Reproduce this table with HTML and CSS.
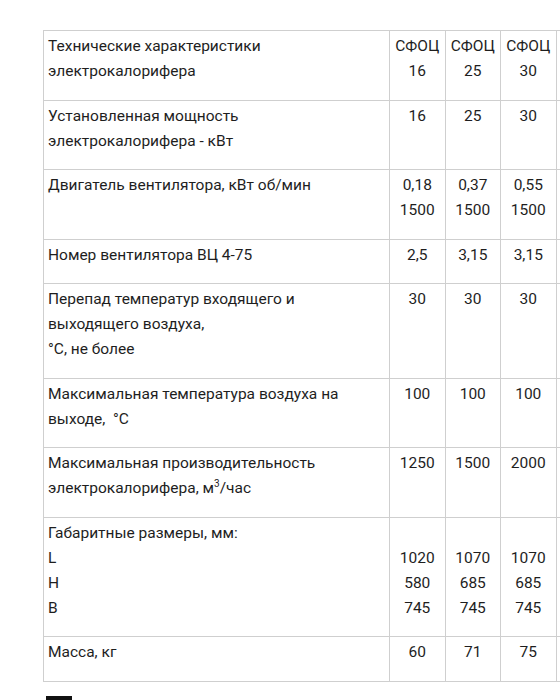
FILE: index.html
```html
<!DOCTYPE html>
<html lang="ru">
<head>
<meta charset="utf-8">
<title>Технические характеристики</title>
<link rel="stylesheet" href="styles.css">
</head>
<body>
<div class="page">
  <table class="spec">
    <colgroup>
      <col class="c-name">
      <col class="c-val">
      <col class="c-val">
      <col class="c-val">
      <col class="c-val">
    </colgroup>
    <tr>
      <td class="name">Технические характеристики электрокалорифера</td>
      <td class="val">СФОЦ 16</td>
      <td class="val">СФОЦ 25</td>
      <td class="val">СФОЦ 30</td>
      <td class="val"></td>
    </tr>
    <tr>
      <td class="name">Установленная мощность электрокалорифера - кВт</td>
      <td class="val">16</td>
      <td class="val">25</td>
      <td class="val">30</td>
      <td class="val"></td>
    </tr>
    <tr>
      <td class="name">Двигатель вентилятора, кВт об/мин</td>
      <td class="val">0,18<br>1500</td>
      <td class="val">0,37<br>1500</td>
      <td class="val">0,55<br>1500</td>
      <td class="val"></td>
    </tr>
    <tr>
      <td class="name">Номер вентилятора ВЦ 4-75</td>
      <td class="val">2,5</td>
      <td class="val">3,15</td>
      <td class="val">3,15</td>
      <td class="val"></td>
    </tr>
    <tr>
      <td class="name">Перепад температур входящего и<br>выходящего воздуха,<br>°С, не более</td>
      <td class="val">30</td>
      <td class="val">30</td>
      <td class="val">30</td>
      <td class="val"></td>
    </tr>
    <tr>
      <td class="name">Максимальная температура воздуха на выходе,&nbsp; °С</td>
      <td class="val">100</td>
      <td class="val">100</td>
      <td class="val">100</td>
      <td class="val"></td>
    </tr>
    <tr>
      <td class="name">Максимальная производительность электрокалорифера, м<sup>3</sup>/час</td>
      <td class="val">1250</td>
      <td class="val">1500</td>
      <td class="val">2000</td>
      <td class="val"></td>
    </tr>
    <tr>
      <td class="name">Габаритные размеры, мм:<br>L<br>H<br>B</td>
      <td class="val"><br>1020<br>580<br>745</td>
      <td class="val"><br>1070<br>685<br>745</td>
      <td class="val"><br>1070<br>685<br>745</td>
      <td class="val"></td>
    </tr>
    <tr>
      <td class="name">Масса, кг</td>
      <td class="val">60</td>
      <td class="val">71</td>
      <td class="val">75</td>
      <td class="val"></td>
    </tr>
  </table>
  <div class="icon"></div>
</div>
</body>
</html>
```

FILE: styles.css
```css
html, body {
  margin: 0;
  padding: 0;
  background: #ffffff;
}

.page {
  width: 560px;
  height: 700px;
  overflow: hidden;
  padding: 30px 0 0 43px;
  box-sizing: border-box;
  font-family: Roboto, "Noto Sans", "Liberation Sans", sans-serif;
  font-size: 15.5px;
  line-height: 25px;
  color: #1e1e1e;
}

.spec {
  border-collapse: collapse;
  table-layout: fixed;
  width: 568px;
}

.c-name { width: 346px; }
.c-val { width: 55.5px; }

.spec td {
  border: 1px solid #cfcfcf;
  vertical-align: top;
  padding: 3px 4px 15.5px;
}

.spec td.val {
  text-align: center;
  padding-left: 2px;
  padding-right: 2px;
}

.spec sup {
  font-size: 10px;
  line-height: 0;
  vertical-align: 6px;
}

.icon {
  margin: 14px 0 0 3px;
  width: 26px;
  height: 10px;
  background: #111111;
}
```
